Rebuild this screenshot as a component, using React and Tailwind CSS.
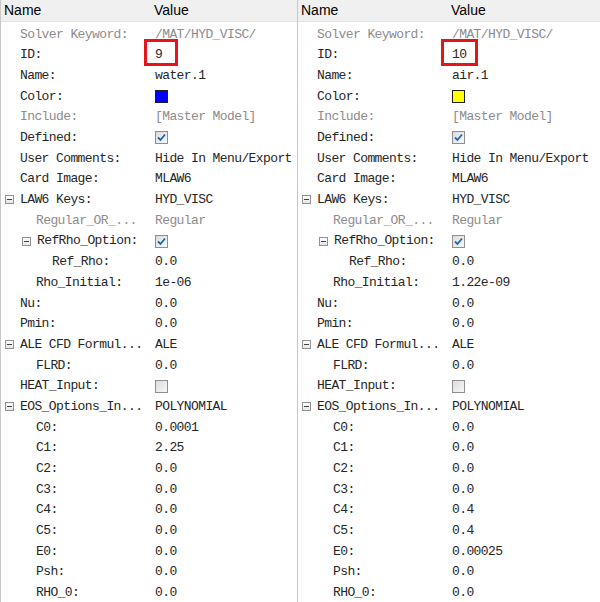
import React from 'react';

const MONO = { fontFamily: '"Liberation Mono", "DejaVu Sans Mono", monospace' };

const left = [
  { name: 'Solver Keyword:', value: '/MAT/HYD_VISC/', muted: true },
  { name: 'ID:', value: '9', boxed: true },
  { name: 'Name:', value: 'water.1' },
  { name: 'Color:', color: 'bg-[#0000ff]' },
  { name: 'Include:', value: '[Master Model]', muted: true },
  { name: 'Defined:', check: true },
  { name: 'User Comments:', value: 'Hide In Menu/Export' },
  { name: 'Card Image:', value: 'MLAW6' },
  { name: 'LAW6 Keys:', value: 'HYD_VISC', tree: true },
  { name: 'Regular_OR_...', value: 'Regular', level: 1, muted: true },
  { name: 'RefRho_Option:', check: true, level: 1, tree: true },
  { name: 'Ref_Rho:', value: '0.0', level: 2 },
  { name: 'Rho_Initial:', value: '1e-06', level: 1 },
  { name: 'Nu:', value: '0.0' },
  { name: 'Pmin:', value: '0.0' },
  { name: 'ALE CFD Formul...', value: 'ALE', tree: true },
  { name: 'FLRD:', value: '0.0', level: 1 },
  { name: 'HEAT_Input:', check: false },
  { name: 'EOS_Options_In...', value: 'POLYNOMIAL', tree: true },
  { name: 'C0:', value: '0.0001', level: 1 },
  { name: 'C1:', value: '2.25', level: 1 },
  { name: 'C2:', value: '0.0', level: 1 },
  { name: 'C3:', value: '0.0', level: 1 },
  { name: 'C4:', value: '0.0', level: 1 },
  { name: 'C5:', value: '0.0', level: 1 },
  { name: 'E0:', value: '0.0', level: 1 },
  { name: 'Psh:', value: '0.0', level: 1 },
  { name: 'RHO_0:', value: '0.0', level: 1 },
];

const rightOverrides = {
  'ID:': '10',
  'Name:': 'air.1',
  'Rho_Initial:': '1.22e-09',
  'C0:': '0.0',
  'C1:': '0.0',
  'C4:': '0.4',
  'C5:': '0.4',
  'E0:': '0.00025',
};

const right = left.map((r) => {
  if (r.name === 'Color:') return { ...r, color: 'bg-[#ffff00]' };
  if (rightOverrides[r.name]) return { ...r, value: rightOverrides[r.name] };
  return r;
});

const INDENT = ['pl-[19px]', 'pl-[35px]', 'pl-[51px]'];
const EXP_INDENT = ['pl-[4px]', 'pl-[21px]'];

function Expander() {
  return (
    <span className="relative inline-block w-[9px] h-[9px] border border-[#919191] bg-gradient-to-b from-white to-[#e6e6e6] mr-[6px]">
      <span className="absolute left-[1px] right-[1px] top-[3px] h-px bg-[#404040]" />
    </span>
  );
}

function CheckBox({ checked }) {
  return (
    <span className="inline-flex items-center justify-center w-[13px] h-[13px] border border-[#8f8f8f] bg-gradient-to-br from-[#dcdcdc] to-[#f8f8f8]">
      {checked && (
        <svg width="11" height="11" viewBox="0 0 11 11">
          <path d="M2 5.5 L4.5 8 L9 2.5" fill="none" stroke="#1c67b0" strokeWidth="1.8" />
        </svg>
      )}
    </span>
  );
}

function Row({ row, boxW }) {
  const level = row.level || 0;
  const pad = row.tree ? EXP_INDENT[level] : INDENT[level];
  const tone = row.muted ? 'text-[#8c8c8c]' : 'text-[#262626]';
  return (
    <div className={`flex items-center h-[20.7px] text-[13px] tracking-[-0.6px] ${tone}`} style={MONO}>
      <div className={`w-[153px] shrink-0 flex items-center whitespace-nowrap ${pad}`}>
        {row.tree && <Expander />}
        <span>{row.name}</span>
      </div>
      <div className="flex-1 flex items-center whitespace-nowrap pl-[1px]">
        {row.color && <span className={`inline-block w-[13px] h-[13px] border border-[#202020] ${row.color}`} />}
        {row.check !== undefined && <CheckBox checked={row.check} />}
        {row.value !== undefined && (
          <span className="relative">
            {row.value}
            {row.boxed && (
              <span
                className={`absolute -left-[11px] -top-[6px] h-[27px] border-[3px] border-[#e8141c] ${boxW}`}
              />
            )}
          </span>
        )}
      </div>
    </div>
  );
}

function Panel({ rows, boxW, className }) {
  return (
    <div className={`flex flex-col bg-white ${className}`}>
      <div
        className="h-[22px] flex items-center bg-[#f0f0f0] border-b border-[#dfe2e7] text-[14px] text-black"
        style={{ fontFamily: '"Liberation Sans", Arial, sans-serif' }}
      >
        <span className="w-[153px] pl-[3px]">Name</span>
        <span>Value</span>
      </div>
      <div className="flex flex-col pt-[2px]">
        {rows.map((r) => (
          <Row key={r.name} row={r} boxW={boxW} />
        ))}
      </div>
    </div>
  );
}

export default function App() {
  return (
    <div className="w-[600px] h-[602px] overflow-hidden flex bg-white">
      <Panel rows={left} boxW="w-[34px]" className="w-[298px] border-l border-r border-[#c8c8c8]" />
      <Panel rows={right} boxW="w-[37px]" className="flex-1" />
    </div>
  );
}
